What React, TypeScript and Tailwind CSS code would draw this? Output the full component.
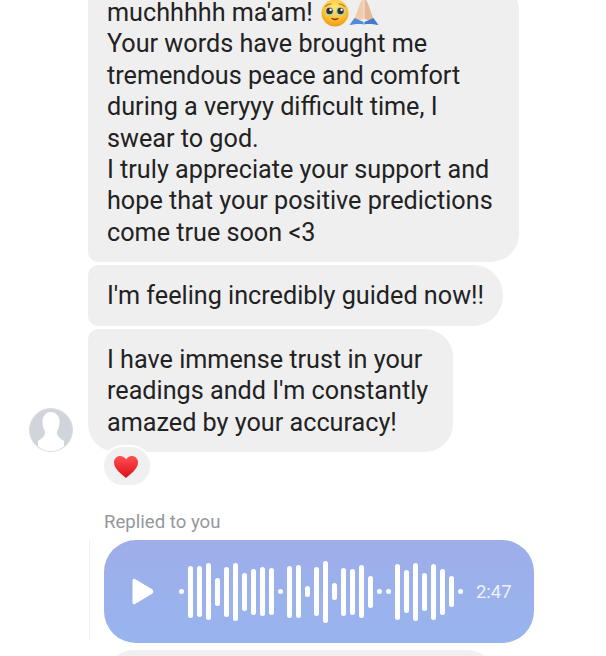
import React from 'react';

// 0 means a dot, anything else is the bar height
const bars = [0, 52, 51, 57, 28, 50, 58, 38, 46, 49, 47, 0, 52, 53, 11, 49, 62, 17, 48, 46, 53, 32, 0, 0, 56, 43, 58, 38, 56, 46, 31, 0];

const TearyFace = () => (
  <svg width="28" height="28" viewBox="0 0 28 28" className="shrink-0">
    <defs>
      <radialGradient id="face" cx="50%" cy="30%" r="75%">
        <stop offset="0%" stopColor="#ffe67a" />
        <stop offset="60%" stopColor="#fdc02f" />
        <stop offset="100%" stopColor="#ec9214" />
      </radialGradient>
    </defs>
    <circle cx="14" cy="14" r="13.5" fill="url(#face)" />
    <path d="M4.5 7.5 Q7 4.5 10 5 M23.5 7.5 Q21 4.5 18 5" stroke="#a8701c" strokeWidth="1.1" fill="none" strokeLinecap="round" />
    <circle cx="8.5" cy="12.5" r="4.6" fill="#b6d6a6" />
    <circle cx="19.5" cy="12.5" r="4.6" fill="#b6d6a6" />
    <circle cx="8.5" cy="12" r="3.2" fill="#3a3028" />
    <circle cx="19.5" cy="12" r="3.2" fill="#3a3028" />
    <circle cx="9.6" cy="10.8" r="1.2" fill="#ffffff" />
    <circle cx="20.6" cy="10.8" r="1.2" fill="#ffffff" />
    <path d="M10.5 19.5 Q14 22.5 17.5 19.5 Q14 20.5 10.5 19.5 Z" fill="#8a3a24" stroke="#8a3a24" strokeWidth="0.8" strokeLinejoin="round" />
  </svg>
);

const FoldedHands = () => (
  <svg width="30" height="27" viewBox="0 0 30 27" className="shrink-0">
    <path d="M14.6 0.5 L14.6 20 L8 22 L5 21 C8 14 10 6 12.5 1.5 Q13.5 0 14.6 0.5 Z" fill="#f0ccac" />
    <path d="M15.4 0.5 L15.4 20 L22 22 L25 21 C22 14 20 6 17.5 1.5 Q16.5 0 15.4 0.5 Z" fill="#e4b998" />
    <path d="M0.5 26 L5.5 19 L14.6 23 L14.6 25.5 C10 24.5 5 25.5 0.5 26 Z" fill="#4f8bd8" />
    <path d="M29.5 26 L24.5 19 L15.4 23 L15.4 25.5 C20 24.5 25 25.5 29.5 26 Z" fill="#3f7bcb" />
  </svg>
);

const Avatar = () => (
  <div className="w-[44px] h-[44px] shrink-0 rounded-full border border-[#dcdde1] bg-[#d1d4db] overflow-hidden">
    <svg width="42" height="42" viewBox="0 0 42 42">
      <path
        d="M21 3 C15.5 3 12.5 7.5 12.5 13 C12.5 17 13.5 20 15 22.5 C15.5 26 13 29 8 32 L8 42 L34 42 L34 32 C29 29 26.5 26 27 22.5 C28.5 20 29.5 17 29.5 13 C29.5 7.5 26.5 3 21 3 Z"
        fill="#ffffff"
      />
    </svg>
  </div>
);

const Heart = () => (
  <svg width="26" height="24" viewBox="0 0 26 24">
    <defs>
      <linearGradient id="heart" x1="0" y1="0" x2="0" y2="1">
        <stop offset="0%" stopColor="#ff4f4f" />
        <stop offset="100%" stopColor="#dd0f1c" />
      </linearGradient>
    </defs>
    <path
      d="M13 23 C9 19.5 1 14 1 7.5 C1 3.5 4 1 7.2 1 C9.6 1 11.8 2.3 13 4.6 C14.2 2.3 16.4 1 18.8 1 C22 1 25 3.5 25 7.5 C25 14 17 19.5 13 23 Z"
      fill="url(#heart)"
    />
  </svg>
);

const App: React.FC = () => {
  return (
    <div className="w-[606px] h-[656px] overflow-hidden bg-white font-['Roboto',sans-serif] text-[25.2px] leading-[31.4px] text-[#222222]">
      <div className="flex items-end gap-[15px] pl-[29px]">
        <Avatar />
        <div className="flex flex-col items-start gap-[3px]">
          <div className="-mt-[18px] w-[431px] h-[280px] pl-[19px] pt-[15px] bg-[#efeff0] rounded-tr-[28px] rounded-br-[28px] rounded-bl-[10px]">
            <div className="flex items-center h-[31.4px]">
              muchhhhh ma'am!
              <span className="flex items-center ml-[8px]">
                <TearyFace />
                <FoldedHands />
              </span>
            </div>
            <div>Your words have brought me</div>
            <div>tremendous peace and comfort</div>
            <div>during a veryyy difficult time, I</div>
            <div>swear to god.</div>
            <div>I truly appreciate your support and</div>
            <div>hope that your positive predictions</div>
            <div>come true soon &lt;3</div>
          </div>
          <div className="w-[415px] h-[61px] pl-[19px] pt-[15px] bg-[#efeff0] rounded-r-[30px] rounded-l-[10px]">
            I'm feeling incredibly guided now!!
          </div>
          <div className="w-[365px] h-[123px] pl-[19px] pt-[15px] bg-[#efeff0] rounded-tl-[10px] rounded-r-[28px] rounded-bl-[28px]">
            <div>I have immense trust in your</div>
            <div>readings andd I'm constantly</div>
            <div>amazed by your accuracy!</div>
          </div>
        </div>
      </div>

      <div className="relative -mt-[7px] ml-[102px] w-[50px] h-[42px] pr-[2px] pt-[2px] flex items-center justify-center rounded-full bg-[#f0f0f0] border-2 border-white">
        <Heart />
      </div>

      <div className="mt-[25px] ml-[104px] text-[18.6px] leading-[21px] text-[#94979c]">Replied to you</div>

      <div className="relative mt-[7px] ml-[104px] w-[430px] h-[103px] flex items-center pl-[28px] rounded-[32px] bg-gradient-to-b from-[#9eaeea] to-[#98b4ee]">
        <div className="absolute -left-[15px] top-0 w-[1px] h-[100px] bg-[#f0f0f0]" />
        <svg width="22" height="27" viewBox="0 0 22 27" className="shrink-0">
          <path d="M0.5 2.5 Q0.5 0 3 1 L20.5 11.5 Q22 13.5 20.5 15.5 L3 26 Q0.5 27 0.5 24.5 Z" fill="#ffffff" />
        </svg>
        <div className="ml-[25px] flex items-center gap-[4px]">
          {bars.map((h, i) =>
            h === 0 ? (
              <div key={i} className="w-[5px] h-[5px] rounded-full bg-white" />
            ) : (
              <div key={i} className="w-[5px] rounded-full bg-white" style={{ height: h }} />
            ),
          )}
        </div>
        <span className="ml-[13px] text-[18.4px] leading-[21px] text-[#eef2fc]">2:47</span>
      </div>

      <div className="mt-[7px] ml-[104px] w-[393px] h-[40px] rounded-t-[30px] bg-[#f0f0f0]" />
    </div>
  );
};

export default App;
